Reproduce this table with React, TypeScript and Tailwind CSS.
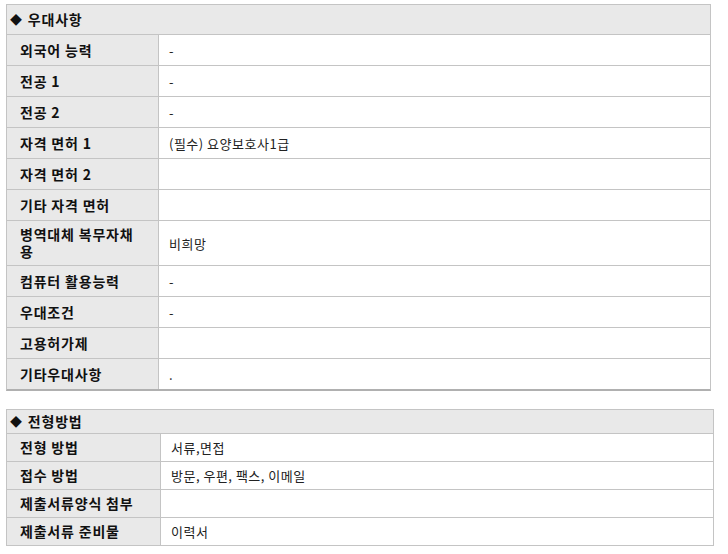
const font = { fontFamily: '"Noto Sans CJK KR", "Noto Sans", sans-serif' }

type Row = { label: string; value: string }

const preferRows: Row[] = [
  { label: '외국어 능력', value: '-' },
  { label: '전공 1', value: '-' },
  { label: '전공 2', value: '-' },
  { label: '자격 면허 1', value: '(필수) 요양보호사1급' },
  { label: '자격 면허 2', value: '' },
  { label: '기타 자격 면허', value: '' },
  { label: '병역대체 복무자채용', value: '비희망' },
  { label: '컴퓨터 활용능력', value: '-' },
  { label: '우대조건', value: '-' },
  { label: '고용허가제', value: '' },
  { label: '기타우대사항', value: '.' },
]

const selectRows: Row[] = [
  { label: '전형 방법', value: '서류,면접' },
  { label: '접수 방법', value: '방문, 우편, 팩스, 이메일' },
  { label: '제출서류양식 첨부', value: '' },
  { label: '제출서류 준비물', value: '이력서' },
]

function Section({
  title,
  rows,
  width,
  labelWidth,
  rowHeight,
  headHeight,
  thickBottom,
}: {
  title: string
  rows: Row[]
  width: string
  labelWidth: string
  rowHeight: string
  headHeight: string
  thickBottom?: boolean
}) {
  return (
    <div
      className={`${width} border-x border-t border-[#c4c4c4] ${
        thickBottom ? 'border-b-2 border-b-[#b0b0b0]' : 'border-b'
      }`}
    >
      {/* Heading */}
      <div className={`${headHeight} flex items-center bg-[#e9e9e9] pl-[3px] text-[14px] tracking-[0.8px] font-bold text-[#111]`}>
        <span className="text-[12px] mr-[5px]">◆</span>
        {title}
      </div>

      {rows.map((row, i) => (
        <div key={i} className={`flex ${rowHeight} border-t border-[#c4c4c4]`}>
          <div
            className={`${labelWidth} shrink-0 flex items-center bg-[#e9e9e9] border-r border-[#c4c4c4] pl-[13px] pr-[18px] py-[5px] text-[14px] tracking-[0.8px] leading-[17px] font-bold text-[#111]`}
          >
            {row.label}
          </div>
          <div className="flex-1 flex items-center bg-white pl-[10px] text-[13px] tracking-[0.5px] leading-[17px] text-[#222]">
            {row.value}
          </div>
        </div>
      ))}
    </div>
  )
}

export default function App() {
  return (
    <div className="min-h-screen bg-white pl-[6px] pt-[4px]" style={font}>
      <Section
        title="우대사항"
        rows={preferRows}
        width="w-[705px]"
        labelWidth="w-[152px]"
        rowHeight="min-h-[31px]"
        headHeight="h-[29px]"
        thickBottom
      />
      <div className="h-[18px]" />
      <Section
        title="전형방법"
        rows={selectRows}
        width="w-[708px]"
        labelWidth="w-[154px]"
        rowHeight="min-h-[28px]"
        headHeight="h-[23px]"
      />
    </div>
  )
}
